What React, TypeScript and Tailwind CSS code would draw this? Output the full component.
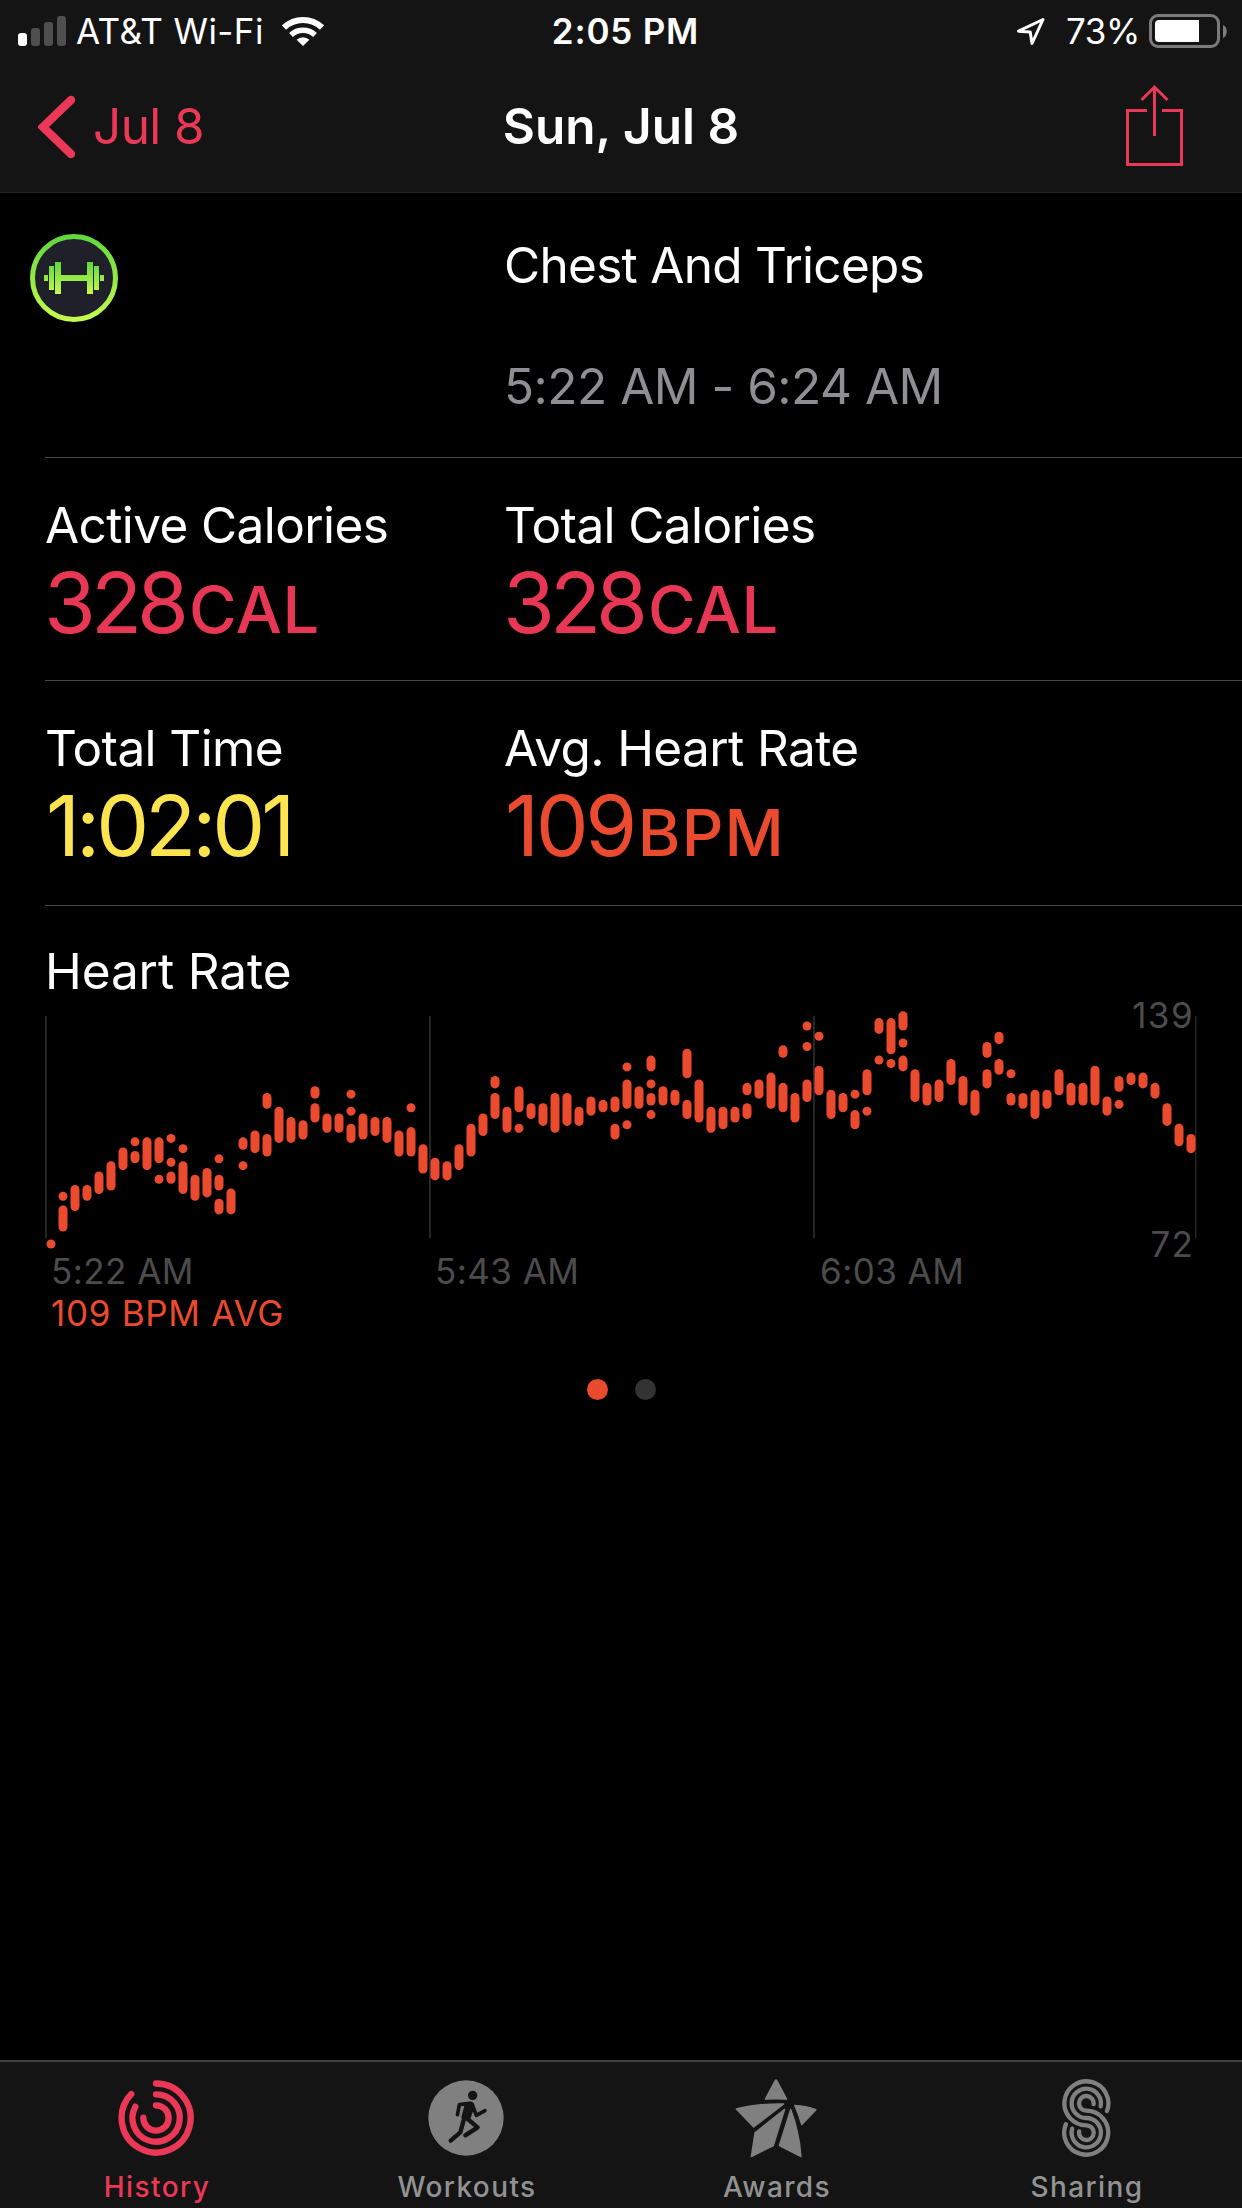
import type { ReactNode } from "react";
import clsx from "clsx";

const CHART_MAX = 139;
const PX_PER_BPM = 3.406;
const BAR_GAP = 12;

// one entry per column, each segment is [high, low] in bpm
const heartRate: number[][][] = [
  [[72, 72]],
  [[86, 86], [82, 77]],
  [[88, 83]],
  [[88, 86]],
  [[92, 88]],
  [[95, 89]],
  [[99, 95]],
  [[102, 102], [98, 97]],
  [[102, 95]],
  [[102, 97], [91, 91]],
  [[103, 103], [96, 96], [92, 91]],
  [[100, 100], [95, 88]],
  [[91, 86]],
  [[93, 87]],
  [[97, 97], [91, 89], [84, 82]],
  [[87, 82]],
  [[102, 101], [95, 95]],
  [[104, 100]],
  [[115, 113], [103, 99]],
  [[111, 103]],
  [[108, 103]],
  [[107, 104]],
  [[117, 116], [112, 109]],
  [[109, 106]],
  [[109, 106]],
  [[116, 116], [111, 111], [106, 103]],
  [[109, 104]],
  [[108, 105]],
  [[108, 103]],
  [[104, 99]],
  [[112, 112], [105, 99]],
  [[100, 94]],
  [[96, 92]],
  [[95, 92]],
  [[100, 95]],
  [[106, 99]],
  [[109, 105]],
  [[120, 119], [115, 110]],
  [[111, 106]],
  [[117, 112], [106, 106]],
  [[112, 110]],
  [[112, 108]],
  [[115, 106]],
  [[115, 108]],
  [[111, 108]],
  [[114, 111]],
  [[113, 112]],
  [[114, 112], [106, 104]],
  [[124, 124], [119, 113], [107, 107]],
  [[117, 113]],
  [[126, 124], [119, 119], [115, 114], [110, 110]],
  [[117, 114]],
  [[116, 114]],
  [[128, 122], [113, 110]],
  [[119, 109]],
  [[111, 106]],
  [[111, 107]],
  [[111, 109]],
  [[118, 117], [112, 110]],
  [[119, 116]],
  [[121, 113]],
  [[129, 128], [118, 112]],
  [[115, 109]],
  [[136, 136], [130, 130], [119, 115]],
  [[133, 133], [123, 117]],
  [[116, 110]],
  [[115, 112]],
  [[116, 116], [110, 107]],
  [[122, 117], [111, 111]],
  [[137, 135], [126, 126]],
  [[137, 129], [125, 125]],
  [[139, 136], [131, 131], [126, 124]],
  [[122, 115]],
  [[118, 114]],
  [[119, 115]],
  [[125, 120]],
  [[120, 114]],
  [[116, 111]],
  [[130, 128], [122, 119]],
  [[133, 132], [125, 123]],
  [[122, 122], [115, 114]],
  [[115, 113]],
  [[116, 110]],
  [[116, 113]],
  [[122, 117]],
  [[118, 114]],
  [[118, 114]],
  [[123, 114]],
  [[114, 111]],
  [[120, 118], [113, 113]],
  [[121, 120]],
  [[121, 119]],
  [[118, 116]],
  [[112, 108]],
  [[106, 102]],
  [[103, 100]],
];

const StatusBar = () => (
  <div className="grid h-[62px] grid-cols-3 items-center text-[35px] leading-none">
    <div className="flex items-center pl-[18px]">
      <div className="flex items-end gap-1">
        <div className="h-[13px] w-[9px] rounded-[3px] bg-white" />
        <div className="h-[18px] w-[9px] rounded-[3px] bg-[#4f4f4f]" />
        <div className="h-6 w-[9px] rounded-[3px] bg-[#4f4f4f]" />
        <div className="h-[30px] w-[9px] rounded-[3px] bg-[#4f4f4f]" />
      </div>
      <span className="ml-[10px] whitespace-nowrap tracking-[0.4px]">AT&amp;T Wi-Fi</span>
      <svg className="ml-[18px] h-[30px] w-[42px]" viewBox="0 0 42 30" fill="none">
        <path d="M2 11.5A27.5 27.5 0 0 1 40 11.5" stroke="white" strokeWidth="6" />
        <path d="M9 19A17.5 17.5 0 0 1 33 19" stroke="white" strokeWidth="5.4" />
        <path d="M21 30L14.6 23.8A9.2 9.2 0 0 1 27.4 23.8Z" fill="white" />
      </svg>
    </div>
    <div className="pl-[9px] text-center font-semibold tracking-[0.8px]">2:05 PM</div>
    <div className="flex items-center justify-end pr-[15px]">
      <svg className="mr-[21px] size-[29px]" viewBox="0 0 29 29" fill="none">
        <path
          d="M27 2.5L2.5 14.2L14.2 14.9L16 26.5Z"
          stroke="white"
          strokeWidth="3"
          strokeLinejoin="round"
        />
      </svg>
      <span className="tracking-[-0.42px]">73%</span>
      <div className="ml-[9px] h-[34px] w-[71px] rounded-[9px] border-[3px] border-[#7b7b7b] p-[3px]">
        <div className="h-[22px] w-[44px] rounded-l-[4px] bg-white" />
      </div>
      <svg className="ml-[3px] h-[13px] w-[4px]" viewBox="0 0 4 13">
        <path d="M0 0C5 2 5 11 0 13Z" fill="#7b7b7b" />
      </svg>
    </div>
  </div>
);

const NavBar = () => (
  <div className="grid h-[130px] grid-cols-3 items-center text-[49.5px] leading-none">
    <div className="flex items-center pl-[38px] text-[#eb3856]">
      <svg className="-mt-px h-[64px] w-[38px]" viewBox="0 0 38 64" fill="none">
        <path
          d="M33 5L5 32L33 59"
          stroke="currentColor"
          strokeWidth="8.4"
          strokeLinecap="round"
          strokeLinejoin="miter"
        />
      </svg>
      <span className="ml-[17px] tracking-[-0.61px]">Jul 8</span>
    </div>
    <div className="whitespace-nowrap text-center font-semibold tracking-[0.06px]">Sun, Jul 8</div>
    <div className="-mt-[3px] flex justify-end pr-[59px] text-[#eb3856]">
      <svg className="h-[83px] w-[58px]" viewBox="0 0 58 83" fill="none" stroke="currentColor" strokeWidth="3">
        <path d="M22 26.500H2.500V80.500H56.500V26.500H37" />
        <path d="M29.500 52V3" />
        <path d="M16.500 16L29.500 3L42.500 16" />
      </svg>
    </div>
  </div>
);

const DumbbellIcon = () => (
  <svg className="size-[88px]" viewBox="0 0 88 88">
    <defs>
      <linearGradient id="lime" x1="0" y1="0" x2="0" y2="88" gradientUnits="userSpaceOnUse">
        <stop offset="0" stopColor="#5fd73c" />
        <stop offset="1" stopColor="#c8fb4f" />
      </linearGradient>
      <linearGradient id="limeBar" x1="0" y1="28" x2="0" y2="60" gradientUnits="userSpaceOnUse">
        <stop offset="0" stopColor="#5fd73c" />
        <stop offset="1" stopColor="#c8fb4f" />
      </linearGradient>
    </defs>
    <circle cx="44" cy="44" r="41.5" fill="#20202a" stroke="url(#lime)" strokeWidth="5" />
    <g fill="url(#limeBar)">
      <rect x="14" y="41" width="4" height="6" />
      <rect x="19" y="32" width="5" height="24" />
      <rect x="25" y="28" width="6" height="32" />
      <rect x="31" y="41" width="26" height="6" />
      <rect x="57" y="28" width="6" height="32" />
      <rect x="64" y="32" width="5" height="24" />
      <rect x="70" y="41" width="4" height="6" />
    </g>
  </svg>
);

interface MetricProps {
  label: string;
  children: ReactNode;
  className?: string;
}

const Metric = ({ label, children, className }: MetricProps) => (
  <div className="flex flex-col">
    <div className="-ml-px whitespace-nowrap text-[49.5px] leading-[60px] tracking-[-0.6px]">{label}</div>
    <div className={clsx("mt-[4px] flex items-baseline text-[84px] leading-[88px]", className)}>
      {children}
    </div>
  </div>
);

const Calories = () => (
  <>
    <span className="-ml-[2px] tracking-[-5px]">328</span>
    <span className="ml-[5px] text-[65px] font-medium tracking-[0.5px]">CAL</span>
  </>
);

const HeartRateChart = () => (
  <div className="relative h-[240px]">
    <svg className="h-[240px] w-[1242px]" viewBox="0 1010 1242 240">
      {[46, 430, 814, 1196].map((x) => (
        <rect key={x} x={x - 1} y="1016" width={x === 1196 ? 1.5 : 2} height="222" fill="#262626" />
      ))}
      <g fill="#ea4b2e">
        {heartRate.map((segments, i) =>
          segments.map(([high, low]) => (
            <rect
              key={`${i}-${high}`}
              x={46.5 + i * BAR_GAP}
              y={1011.3 + (CHART_MAX - high) * PX_PER_BPM}
              width="9"
              height={9 + (high - low) * PX_PER_BPM}
              rx="4.5"
            />
          )),
        )}
      </g>
    </svg>
    <div className="absolute right-[48px] -top-[13px] text-[35px] leading-[36px] tracking-[1.4px] text-[#4c4c4c]">
      139
    </div>
    <div className="absolute right-[48px] top-[216px] text-[35px] leading-[36px] tracking-[1.2px] text-[#4c4c4c]">
      72
    </div>
  </div>
);

const HistoryIcon = () => (
  <svg className="size-[76px]" viewBox="0 0 228 228" fill="none" stroke="currentColor" strokeWidth="19" strokeLinecap="round">
    <path d="M114 10.5A103.5 103.5 0 1 1 40 42" />
    <path d="M114 43A71 71 0 1 1 52 80" />
    <path d="M114 76A38 38 0 1 1 76 113" />
  </svg>
);

const WorkoutsIcon = () => (
  <svg className="size-[76px]" viewBox="0 0 228 228" fill="none">
    <circle cx="114" cy="114" r="113" fill="currentColor" />
    <g stroke="#141414" strokeLinecap="round" strokeLinejoin="round">
      <circle cx="134" cy="46" r="14" fill="#141414" stroke="none" />
      <path d="M127 70L94 74L88.500 104" strokeWidth="11" />
      <path d="M133 74L145 106L171 92" strokeWidth="11" />
      <path d="M110 70L132 68L136 82L124 116L103 112L112 78Z" fill="#141414" strokeWidth="6" />
      <path d="M110 110L97 157L68 182" strokeWidth="13" />
      <path d="M113 112L149 142L112 166" strokeWidth="13" />
    </g>
  </svg>
);

const AwardsIcon = () => (
  <svg className="h-[79px] w-[82px]" viewBox="0 0 246 237" fill="currentColor" stroke="currentColor" strokeWidth="4" strokeLinejoin="round">
    <path d="M121 4Q123 2 125 4L155 60.500Q123 58 91 60.500Z" />
    <path d="M4 90Q60 74 146 75L56 144Z" />
    <path d="M179 79Q212 80 243 92L200 137Q192 108 179 79Z" />
    <path d="M149 91L115 200L49 233L60 161Z" />
    <path d="M167 91L133 200L198 233Q193 160 167 91Z" />
  </svg>
);

const SharingIcon = () => (
  <svg className="h-[78px] w-[49px]" viewBox="0 0 147 234" fill="none" stroke="currentColor" strokeWidth="13" strokeLinecap="round">
    <path d="M135 96A66 66 0 1 0 73 139A22 22 0 1 1 51.500 157" />
    <path d="M116 82A44 44 0 1 0 73 117A44 44 0 1 1 30.500 149" />
    <path d="M95 75A22 22 0 1 0 73 95A66 66 0 1 1 11.500 136" />
  </svg>
);

const tabs = [
  { name: "History", icon: <HistoryIcon />, active: true },
  { name: "Workouts", icon: <WorkoutsIcon /> },
  { name: "Awards", icon: <AwardsIcon /> },
  { name: "Sharing", icon: <SharingIcon /> },
];

const TabBar = () => (
  <nav className="grid h-[148px] grid-cols-4 border-t-2 border-[#404040] bg-[#141414] px-px">
    {tabs.map((tab) => (
      <div
        key={tab.name}
        className={clsx("flex flex-col items-center", tab.active ? "text-[#eb3856]" : "text-[#808080]")}
      >
        <div className="mt-[15px] flex h-[82px] items-center justify-center">{tab.icon}</div>
        <div
          className={clsx(
            "mt-[12px] pl-[2px] text-[28px] font-medium leading-[32px] tracking-[1.4px]",
            !tab.active && "text-[#929292]",
          )}
        >
          {tab.name}
        </div>
      </div>
    ))}
  </nav>
);

const App = () => {
  return (
    <div className="flex h-[2208px] w-[1242px] flex-col overflow-hidden bg-black font-['Inter',sans-serif] text-white">
      <header className="h-[193px] border-b border-[#262626] bg-[#141414]">
        <StatusBar />
        <NavBar />
      </header>

      <main className="flex flex-1 flex-col">
        <section className="ml-[45px] flex h-[265px] border-b border-[#464648] text-[49.5px] leading-[60px]">
          <div className="-ml-[15px] w-[474px] pt-[41px]">
            <DumbbellIcon />
          </div>
          <div className="flex flex-col pt-[42px]">
            <div className="tracking-[-0.72px]">Chest And Triceps</div>
            <div className="mt-[61px] tracking-[-0.5px] text-[#8e8e93]">5:22 AM - 6:24 AM</div>
          </div>
        </section>

        <section className="ml-[45px] grid h-[223px] grid-cols-[459px_1fr] border-b border-[#464648] pl-px pt-[37px]">
          <Metric label="Active Calories" className="text-[#e73755]">
            <Calories />
          </Metric>
          <Metric label="Total Calories" className="text-[#e73755]">
            <Calories />
          </Metric>
        </section>

        <section className="ml-[45px] grid h-[225px] grid-cols-[459px_1fr] border-b border-[#464648] pl-px pt-[37px]">
          <Metric label="Total Time" className="text-[#fbe44e]">
            <span className="tracking-[-4.1px]">1:02:01</span>
          </Metric>
          <Metric label="Avg. Heart Rate" className="text-[#ea4b2e]">
            <span className="tracking-[-3.5px]">109</span>
            <span className="ml-[4px] text-[65px] font-medium tracking-[1.2px]">BPM</span>
          </Metric>
        </section>

        <section className="flex flex-col">
          <h2 className="mt-[35px] h-[69px] pl-[45px] text-[49.5px] leading-[60px] tracking-[-0.1px]">Heart Rate</h2>
          <HeartRateChart />
          <div className="mt-[3px] grid grid-cols-[384px_385px_384px] pl-[51px] text-[35px] leading-[36px] tracking-[0.45px] text-[#4c4c4c]">
            <span>5:22 AM</span>
            <span>5:43 AM</span>
            <span>6:03 AM</span>
          </div>
          <div className="mt-[6px] pl-[51px] text-[35px] leading-[36px] tracking-[0.7px] text-[#ea4b2e]">
            109 BPM AVG
          </div>
          <div className="mt-[48px] flex justify-center gap-[27px]">
            <div className="size-[21px] rounded-full bg-[#ea4b2e]" />
            <div className="size-[21px] rounded-full bg-[#333333]" />
          </div>
        </section>
      </main>

      <TabBar />
    </div>
  );
};
export default App;
